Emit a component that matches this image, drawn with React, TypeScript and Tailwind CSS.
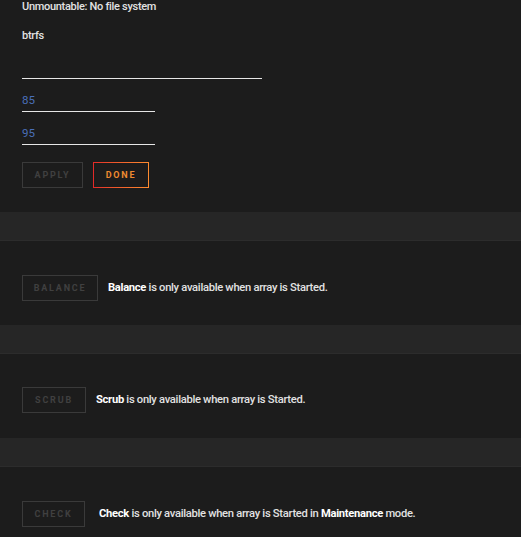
import React from "react";

function GhostButton({ label, w }: { label: string; w: string }) {
  return (
    <div
      className={`${w} h-[26px] shrink-0 border border-[#3a3a3a] flex items-center justify-center pt-[2px] text-[9px] font-bold tracking-[1.8px] text-[#404040] uppercase`}
    >
      {label}
    </div>
  );
}

function Band() {
  return <div className="h-[29px] bg-[#262626] border-b border-[#2c2c2c]" />;
}

export default function App() {
  return (
    <div
      className="w-full min-h-[537px] bg-[#1c1c1c] text-[#e2e2e2] text-[11.2px]"
      style={{ fontFamily: "Roboto, 'Liberation Sans', sans-serif" }}
    >
      <div className="px-[22px]">
        <p className="leading-[14px] text-[11px] font-medium tracking-[-0.3px]">Unmountable: No file system</p>
        <p className="mt-[15px] leading-[14px] text-[11px] font-medium tracking-[-0.3px]">btrfs</p>
        <div className="mt-[3px] w-[240px] h-[33px] border-b border-[#e6e6e6]" />
        <div className="w-[133px] h-[33px] border-b border-[#e6e6e6] pt-[14px] leading-[14px] text-[11.5px] text-[#4a6fb8]">
          85
        </div>
        <div className="w-[133px] h-[33px] border-b border-[#e6e6e6] pt-[14px] leading-[14px] text-[11.5px] text-[#4a6fb8]">
          95
        </div>
        <div className="mt-[17px] mb-[24px] flex gap-[10px]">
          <GhostButton label="Apply" w="w-[61px]" />
          <div className="w-[56px] h-[26px] p-[1px] bg-gradient-to-r from-[#e22828] to-[#ff8c2f]">
            <div className="w-full h-full bg-[#1c1c1c] flex items-center justify-center pt-[2px] text-[9px] font-bold tracking-[1.8px] text-[#ee8a30]">
              DONE
            </div>
          </div>
        </div>
      </div>

      <Band />
      <div className="h-[84px] px-[22px] pt-[34px]">
        <div className="flex items-center">
          <GhostButton label="Balance" w="w-[76px]" />
          <p className="ml-[10px] font-medium tracking-[-0.3px]">
            <span className="font-bold text-white">Balance</span> is only available when array is Started.
          </p>
        </div>
      </div>

      <Band />
      <div className="h-[84px] px-[22px] pt-[33px]">
        <div className="flex items-center">
          <GhostButton label="Scrub" w="w-[64px]" />
          <p className="ml-[10px] font-medium tracking-[-0.3px]">
            <span className="font-bold text-white">Scrub</span> is only available when array is Started.
          </p>
        </div>
      </div>

      <Band />
      <div className="h-[72px] px-[22px] pt-[34px]">
        <div className="flex items-center">
          <GhostButton label="Check" w="w-[63px]" />
          <p className="ml-[14px] font-medium tracking-[-0.3px]">
            <span className="font-bold text-white">Check</span> is only available when array is Started in{" "}
            <span className="font-bold text-white">Maintenance</span> mode.
          </p>
        </div>
      </div>
    </div>
  );
}
